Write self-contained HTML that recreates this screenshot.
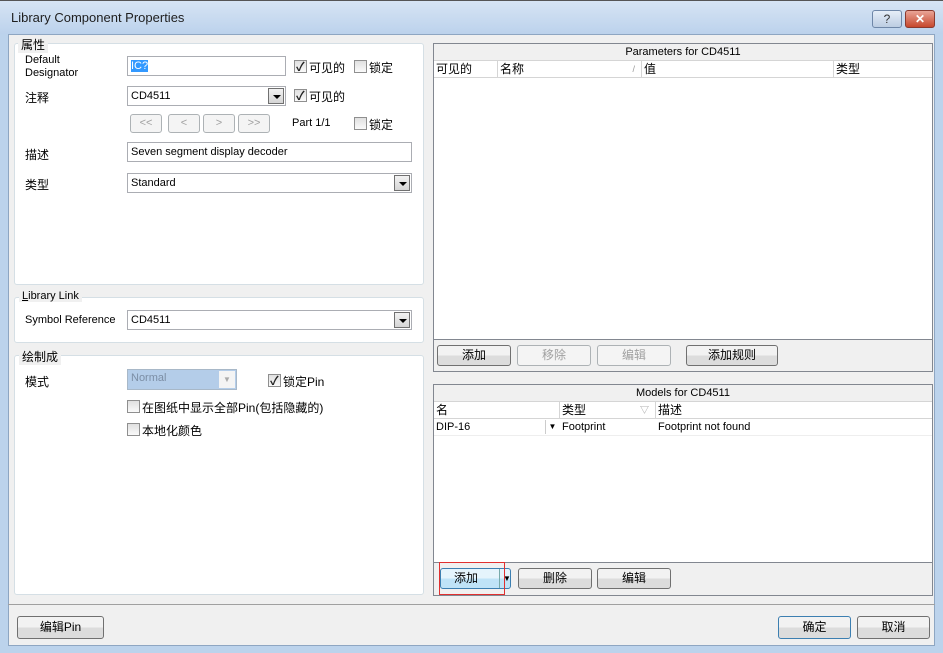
<!DOCTYPE html>
<html><head><meta charset="utf-8"><style>
*{box-sizing:border-box;margin:0;padding:0}
body{width:943px;height:653px;overflow:hidden;position:relative;background:#bcd3ec;font-family:"Liberation Sans","Noto Sans CJK SC",sans-serif;font-size:12px;color:#000}
.a{position:absolute}
.s{font-size:11px}
.title{left:0;top:0;width:943px;height:34px;background:linear-gradient(#d6e4f4,#bcd2ec);border-top:1px solid #555}
.client{left:8px;top:34px;width:927px;height:612px;background:#f0f0f0;border:1px solid #8ea6c2}
.grp{border:1px solid #d5dfe5;border-radius:3px;background:#fff}
.lbl{background:#f0f0f0;padding:0 3px}
.inp{background:#fff;border:1px solid #abadb3;height:20px;padding:2px 3px;line-height:14px;font-size:11px}
.dd{position:absolute;right:1px;top:1px;width:16px;height:16px;border:1px solid #707070;background:linear-gradient(#f2f2f2,#d5d5d5)}
.dd:after{content:"";position:absolute;left:4px;top:6px;border-left:4px solid transparent;border-right:4px solid transparent;border-top:4px solid #000}
.cb{width:13px;height:13px;border:1px solid #8f8f8f;background:linear-gradient(#e0e0e0,#fafafa)}
.cb.c:after{content:"✓";position:absolute;left:1px;top:-3px;font-size:12px;font-weight:bold;color:#222}
.btn{border:1px solid #707070;border-radius:3px;background:linear-gradient(#f2f2f2 50%,#dcdcdc 50%);text-align:center;line-height:19px;height:21px}
.btn.dis{border-color:#adb2b5;color:#a0a0a0;background:#f4f4f4}
.panel{border:1px solid #828790;background:#fff}
.hdr{background:#f0f0f0;border-bottom:1px solid #d5d5d5;text-align:center;height:17px;line-height:16px;font-size:11px}
.col{position:absolute;top:0;height:17px;line-height:16px;border-right:1px solid #d5d5d5;padding-left:2px}
</style></head><body>
<div class="a title"></div>
<div class="a" style="left:11px;top:10px;font-size:13px;color:#1e1e1e">Library Component Properties</div>
<div class="a" style="left:872px;top:10px;width:30px;height:18px;border:1px solid #6f87a8;border-radius:3px;background:linear-gradient(#e6eef8,#bccde2);text-align:center;font-size:12px;line-height:16px;color:#333">?</div>
<div class="a" style="left:905px;top:10px;width:30px;height:18px;border:1px solid #8a3a2f;border-radius:3px;background:linear-gradient(#e9a597,#c7472d);text-align:center;color:#fff;font-weight:bold;line-height:16px">✕</div>
<div class="a client"></div>

<div class="a grp" style="left:14px;top:43px;width:410px;height:242px"></div>
<div class="a lbl" style="left:18px;top:36px">属性</div>
<div class="a s" style="left:25px;top:54px;line-height:13px">Default<br>Designator</div>
<div class="a inp" style="left:127px;top:56px;width:159px"><span style="background:#3399ff;color:#fff">IC?</span></div>
<div class="a cb c" style="left:294px;top:60px"></div><div class="a" style="left:309px;top:59px">可见的</div>
<div class="a cb" style="left:354px;top:60px"></div><div class="a" style="left:369px;top:59px">锁定</div>
<div class="a" style="left:25px;top:89px">注释</div>
<div class="a inp" style="left:127px;top:86px;width:159px">CD4511<div class="dd"></div></div>
<div class="a cb c" style="left:294px;top:89px"></div><div class="a" style="left:309px;top:88px">可见的</div>
<div class="a btn dis s" style="left:130px;top:114px;width:32px;height:19px;line-height:17px">&lt;&lt;</div>
<div class="a btn dis s" style="left:168px;top:114px;width:32px;height:19px;line-height:17px">&lt;</div>
<div class="a btn dis s" style="left:203px;top:114px;width:32px;height:19px;line-height:17px">&gt;</div>
<div class="a btn dis s" style="left:238px;top:114px;width:32px;height:19px;line-height:17px">&gt;&gt;</div>
<div class="a s" style="left:292px;top:117px">Part 1/1</div>
<div class="a cb" style="left:354px;top:117px"></div><div class="a" style="left:369px;top:116px">锁定</div>
<div class="a" style="left:25px;top:146px">描述</div>
<div class="a inp" style="left:127px;top:142px;width:285px">Seven segment display decoder</div>
<div class="a" style="left:25px;top:176px">类型</div>
<div class="a inp" style="left:127px;top:173px;width:285px">Standard<div class="dd"></div></div>

<div class="a grp" style="left:14px;top:297px;width:410px;height:46px"></div>
<div class="a lbl s" style="left:19px;top:290px"><u>L</u>ibrary Link</div>
<div class="a s" style="left:25px;top:314px">Symbol Reference</div>
<div class="a inp" style="left:127px;top:310px;width:285px">CD4511<div class="dd"></div></div>

<div class="a grp" style="left:14px;top:355px;width:410px;height:240px"></div>
<div class="a lbl" style="left:19px;top:348px">绘制成</div>
<div class="a" style="left:25px;top:373px">模式</div>
<div class="a s" style="left:127px;top:369px;width:110px;height:21px;background:#b4cde9;border:1px solid #a8b8c8;color:#7c8ea5;padding:2px 3px">Normal<div style="position:absolute;right:1px;top:1px;width:16px;height:17px;background:#f4f4f4;color:#aaa;font-size:8px;text-align:center;line-height:17px">▼</div></div>
<div class="a cb c" style="left:268px;top:374px"></div><div class="a" style="left:283px;top:373px">锁定Pin</div>
<div class="a cb" style="left:127px;top:400px"></div><div class="a" style="left:142px;top:399px">在图纸中显示全部Pin(包括隐藏的)</div>
<div class="a cb" style="left:127px;top:423px"></div><div class="a" style="left:142px;top:422px">本地化颜色</div>

<div class="a panel" style="left:433px;top:43px;width:500px;height:297px">
 <div class="hdr">Parameters for CD4511</div>
 <div style="position:relative;height:17px;border-bottom:1px solid #d5d5d5">
  <div class="col" style="left:0;width:64px">可见的</div>
  <div class="col" style="left:64px;width:144px">名称<span style="position:absolute;right:6px;color:#999;font-size:9px">/</span></div>
  <div class="col" style="left:208px;width:192px">值</div>
  <div class="col" style="left:400px;width:98px;border:none">类型</div>
 </div>
</div>
<div class="a" style="left:433px;top:340px;width:500px;height:32px;background:#f0f0f0;border:1px solid #828790;border-top:none"></div>
<div class="a btn" style="left:437px;top:345px;width:74px">添加</div>
<div class="a btn dis" style="left:517px;top:345px;width:74px">移除</div>
<div class="a btn dis" style="left:597px;top:345px;width:74px">编辑</div>
<div class="a btn" style="left:686px;top:345px;width:92px">添加规则</div>

<div class="a panel" style="left:433px;top:384px;width:500px;height:179px">
 <div class="hdr">Models for CD4511</div>
 <div style="position:relative;height:17px;border-bottom:1px solid #d5d5d5">
  <div class="col" style="left:0;width:126px">名</div>
  <div class="col" style="left:126px;width:96px">类型<span style="position:absolute;right:6px;color:#999;font-size:9px">▽</span></div>
  <div class="col" style="left:222px;width:276px;border:none">描述</div>
 </div>
 <div class="s" style="position:relative;height:17px;border-bottom:1px solid #eee">
  <div class="col" style="left:0;width:126px;border:none">DIP-16<span style="position:absolute;right:1px;top:1px;width:14px;height:14px;font-size:8px;text-align:center;line-height:14px;border-left:1px solid #ccc">▼</span></div>
  <div class="col" style="left:126px;width:96px;border:none">Footprint</div>
  <div class="col" style="left:222px;width:276px;border:none">Footprint not found</div>
 </div>
</div>
<div class="a" style="left:433px;top:563px;width:500px;height:33px;background:#f0f0f0;border:1px solid #828790;border-top:none"></div>
<div class="a btn" style="left:440px;top:568px;width:71px;border-color:#3c7fb1;background:linear-gradient(#e5f4fc 50%,#bfe3f7 50%);text-align:left;padding-left:13px">添加<span style="position:absolute;left:58px;top:0;height:19px;border-left:1px solid #7aa;padding-left:3px;font-size:8px">▼</span></div>
<div class="a" style="left:439px;top:562px;width:66px;height:33px;border:1px solid #e03030"></div>
<div class="a btn" style="left:518px;top:568px;width:74px">删除</div>
<div class="a btn" style="left:597px;top:568px;width:74px">编辑</div>

<div class="a" style="left:8px;top:604px;width:927px;height:1px;background:#a0a0a0"></div>
<div class="a btn" style="left:17px;top:616px;width:87px;height:23px;line-height:21px">编辑Pin</div>
<div class="a btn" style="left:778px;top:616px;width:73px;height:23px;line-height:21px;border-color:#3c7fb1">确定</div>
<div class="a btn" style="left:857px;top:616px;width:73px;height:23px;line-height:21px">取消</div>
</body></html>
